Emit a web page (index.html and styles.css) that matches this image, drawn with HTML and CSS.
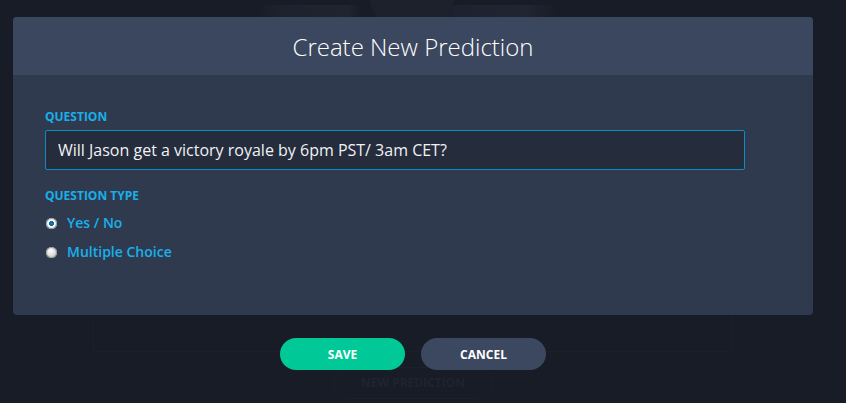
FILE: index.html
```html
<!DOCTYPE html>
<html lang="en">
<head>
  <meta charset="UTF-8" />
  <title>Create New Prediction</title>
  <meta name="viewport" content="width=device-width, initial-scale=1.0"/>
  <link rel="stylesheet" href="styles.css">
</head>
<body>

  <!-- pagina de fondo, tapada por el modal -->
  <div class="backdrop">
    <div class="bg-art"></div>
    <div class="bg-circle"></div>
    <div class="bg-panel"></div>
    <div class="bg-button">NEW PREDICTION</div>
  </div>

  <div class="page">
    <div class="modal">
      <div class="modal-header">
        <h1>Create New Prediction</h1>
      </div>
      <div class="modal-body">
        <label class="field-label" for="question">QUESTION</label>
        <input type="text" id="question" class="question-input" value="Will Jason get a victory royale by 6pm PST/ 3am CET?">

        <div class="field-label type-label">QUESTION TYPE</div>
        <div class="radio-list">
          <label class="radio-row">
            <span class="radio checked"></span>
            Yes / No
          </label>
          <label class="radio-row">
            <span class="radio"></span>
            Multiple Choice
          </label>
        </div>
      </div>
    </div>

    <div class="actions">
      <button class="btn btn-save">SAVE</button>
      <button class="btn btn-cancel">CANCEL</button>
    </div>
  </div>

</body>
</html>
```

FILE: styles.css
```css
body {
  font-family: 'Open Sans', 'Noto Sans', sans-serif;
  background: #181c26;
  margin: 0;
  padding: 0;
  height: 403px;
  overflow: hidden;
  position: relative;
}

/* Fondo */
.backdrop {
  position: absolute;
  inset: 0;
}

.bg-circle {
  position: absolute;
  left: 369px;
  top: -50px;
  width: 86px;
  height: 86px;
  border-radius: 50%;
  background: #1d212c;
}

.bg-art {
  position: absolute;
  left: 258px;
  top: 5px;
  width: 300px;
  height: 12px;
  background: linear-gradient(90deg, transparent 0, #1e222e 8%, #20242f 30%, transparent 34%, transparent 62%, #1e2230 66%, #212431 90%, transparent 100%);
}

.bg-panel {
  position: absolute;
  left: 93px;
  top: 300px;
  width: 638px;
  height: 50px;
  border: 1px dotted #1d212b;
}

.bg-button {
  position: absolute;
  left: 333px;
  top: 367px;
  width: 158px;
  height: 30px;
  border: 1px solid #1c202a;
  border-radius: 16px;
  color: #1f2330;
  font-size: 12px;
  font-weight: 700;
  line-height: 30px;
  text-align: center;
}

.page {
  position: relative;
  width: 800px;
  padding: 17px 0 0 13px;
}

/* Modal */
.modal {
  background: #2f3a4f;
  border-radius: 4px;
  overflow: hidden;
  height: 298px;
}

.modal-header {
  background: #3b475e;
  height: 58px;
  display: flex;
  align-items: center;
  justify-content: center;
}

.modal-header h1 {
  margin: 0;
  color: #ffffff;
  font-size: 24px;
  font-weight: 300;
}

.modal-body {
  padding: 34px 32px 0 32px;
}

.field-label {
  display: block;
  color: #19b0ea;
  font-size: 12px;
  font-weight: 700;
  line-height: 16px;
  margin-bottom: 5px;
}

.question-input {
  display: block;
  box-sizing: border-box;
  width: 700px;
  height: 40px;
  padding: 0 12px;
  background: #252c3c;
  border: 1px solid #0c8cc0;
  border-radius: 2px;
  color: #f0f2f5;
  font-family: inherit;
  font-size: 16px;
  outline: none;
}

.type-label {
  margin-top: 18px;
  margin-bottom: 9px;
}

.radio-list {
  display: flex;
  flex-direction: column;
  gap: 9px;
}

.radio-row {
  display: flex;
  align-items: center;
  gap: 10px;
  color: #19b0ea;
  font-size: 14px;
  font-weight: 600;
  line-height: 20px;
}

.radio {
  width: 11px;
  height: 11px;
  border-radius: 50%;
  margin-left: 1px;
  background: radial-gradient(circle at 40% 35%, #ffffff 0, #d8d8d8 55%, #b0b0b0 100%);
  box-shadow: 0 0 0 1px #9a9a9a inset;
}

.radio.checked {
  background: radial-gradient(circle at 50% 50%, #0d8ad0 0, #0a5d9a 28%, #ffffff 36%, #d0d0d0 100%);
}

/* Botones */
.actions {
  display: flex;
  justify-content: center;
  gap: 16px;
  margin-top: 23px;
}

.btn {
  width: 125px;
  height: 32px;
  border: none;
  border-radius: 16px;
  color: #ffffff;
  font-family: inherit;
  font-size: 12px;
  font-weight: 700;
  cursor: pointer;
}

.btn-save {
  background: #00c896;
}

.btn-cancel {
  background: #3c4760;
}
```
